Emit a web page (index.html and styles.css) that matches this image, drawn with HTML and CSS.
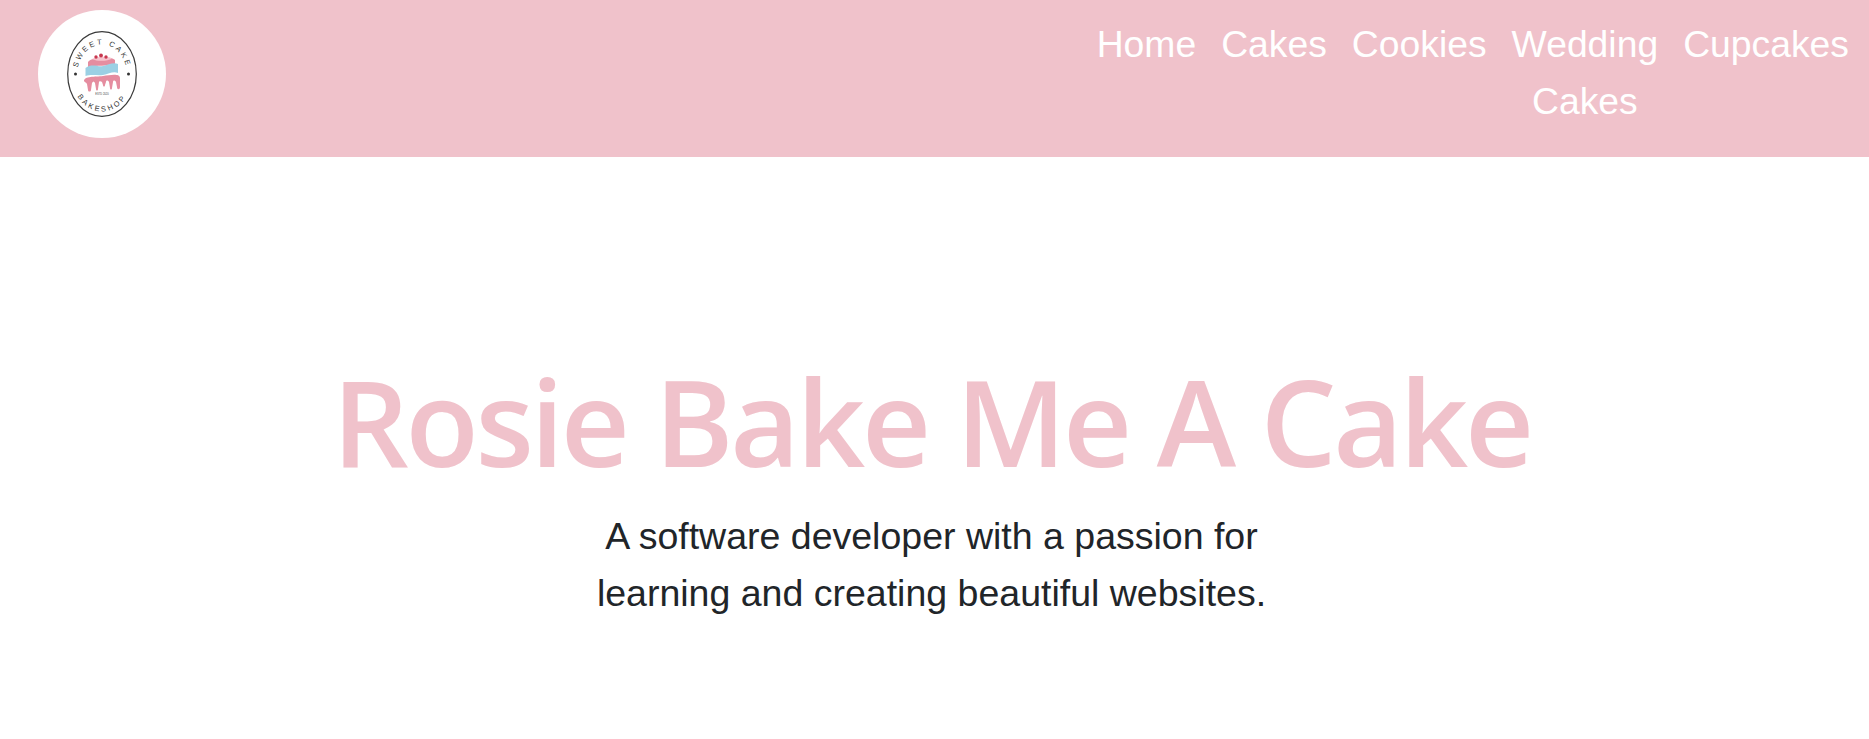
FILE: index.html
```html
<!DOCTYPE html>
<html lang="en">
<head>
  <meta charset="UTF-8">
  <meta name="viewport" content="width=device-width, initial-scale=1.0">
  <title>Rosie Bake Me A Cake - Home</title>
  <link rel="stylesheet" href="styles.css">
</head>
<body>
  <header class="site-header">
    <a class="logo" href="#">
      <svg class="logo-mark" viewBox="0 0 70 86" width="70" height="86" aria-label="Sweet Cake Bakeshop logo">
        <ellipse cx="35" cy="43" rx="34.3" ry="42.3" fill="none" stroke="#3a3a3a" stroke-width="1.2"/>
        <defs>
          <path id="arcTop" d="M9.5 46 A25.5 32.5 0 0 1 60.5 46"/>
          <path id="arcBottom" d="M4 42 A31 38.5 0 0 0 66 42"/>
        </defs>
        <text class="logo-text"><textPath href="#arcTop" startOffset="50%" text-anchor="middle">SWEET CAKE</textPath></text>
        <text class="logo-text"><textPath href="#arcBottom" startOffset="50%" text-anchor="middle">BAKESHOP</textPath></text>
        <circle cx="8.5" cy="43" r="1.5" fill="#333"/>
        <circle cx="61.5" cy="43" r="1.5" fill="#333"/>
        <!-- top tier -->
        <path d="M21 31 C24 26 45 25 48 29 L48 34 C40 35 30 34 21 36 Z" fill="#e58da0"/>
        <path d="M25 28 C30 25.5 41 25 45 27.5 C41 30 31 31 25 28 Z" fill="#f6c3cd"/>
        <circle cx="29" cy="26" r="1.7" fill="#c8374f"/>
        <circle cx="34" cy="24.5" r="1.9" fill="#c8374f"/>
        <circle cx="39" cy="26" r="1.7" fill="#c8374f"/>
        <!-- blue tier -->
        <path d="M18.5 37 C25 32 30 36 36 35 C41 34 46 31 51 33 L51 42 C46 40 42 43 36 44 C30 45 25 43 18.5 45 Z" fill="#9bd0e4"/>
        <!-- drip tier -->
        <path d="M17 50 C17 45 28 46 36 45 C43 44 53 42 53 47 L53 56 C53 59 50 59 50 56 L49 51 C48 49 46 49 46 51 L45 57 C45 59 43 59 43 57 L42 51 C41 49 39 49 39 51 L38 54 C38 56 36 56 36 54 L35 51 C34 50 32 50 32 51 L31 58 C31 60 29 60 29 58 L28 52 C27 50 26 50 25 52 L24 59 C24 61 21 61 21 59 L20 53 C19 51 17 51 17 50 Z" fill="#e58da0"/>
        <text class="logo-est" x="35" y="63.5" text-anchor="middle">ESTD 2020</text>
      </svg>
    </a>
    <ul class="nav-links">
      <li><a href="#">Home</a></li>
      <li><a href="#">Cakes</a></li>
      <li><a href="#">Cookies</a></li>
      <li><a href="#">Wedding Cakes</a></li>
      <li><a href="#">Cupcakes</a></li>
    </ul>
  </header>

  <main class="hero">
    <h1>Rosie Bake Me A Cake</h1>
    <p>A software developer with a passion for learning and creating beautiful websites.</p>
  </main>
</body>
</html>
```

FILE: styles.css
```css
* {
  margin: 0;
  padding: 0;
  box-sizing: border-box;
}

body {
  font-family: "Liberation Sans", Arial, sans-serif;
  background-color: #ffffff;
  color: #212529;
  font-size: 37.3px;
  line-height: 57px;
}

.site-header {
  background-color: #f0c2cb;
  height: 157px;
  padding: 10px 20px 0 38px;
  display: flex;
  justify-content: space-between;
  align-items: flex-start;
}

.logo {
  width: 128px;
  height: 128px;
  background-color: #ffffff;
  border-radius: 50%;
  display: flex;
  align-items: center;
  justify-content: center;
}

.logo-text {
  font-family: "Liberation Sans", Arial, sans-serif;
  font-size: 7.4px;
  letter-spacing: 2.4px;
  fill: #333333;
}

.logo-est {
  font-family: "Liberation Sans", Arial, sans-serif;
  font-size: 2.6px;
  fill: #444444;
}

.nav-links {
  list-style: none;
  display: flex;
  gap: 25px;
  padding-top: 6px;
}

.nav-links li {
  text-align: center;
  width: min-content;
}

.nav-links a {
  color: #ffffff;
  text-decoration: none;
}

.hero {
  display: flex;
  flex-direction: column;
  align-items: center;
  text-align: center;
  padding: 189px 6px 0 0;
}

.hero h1 {
  font-family: "Open Sans", sans-serif;
  font-size: 120px;
  font-weight: 600;
  letter-spacing: -3.3px;
  line-height: 150px;
  color: #f0c2cb;
}

.hero p {
  max-width: 700px;
  margin-top: 12px;
  font-size: 37.5px;
}
```
